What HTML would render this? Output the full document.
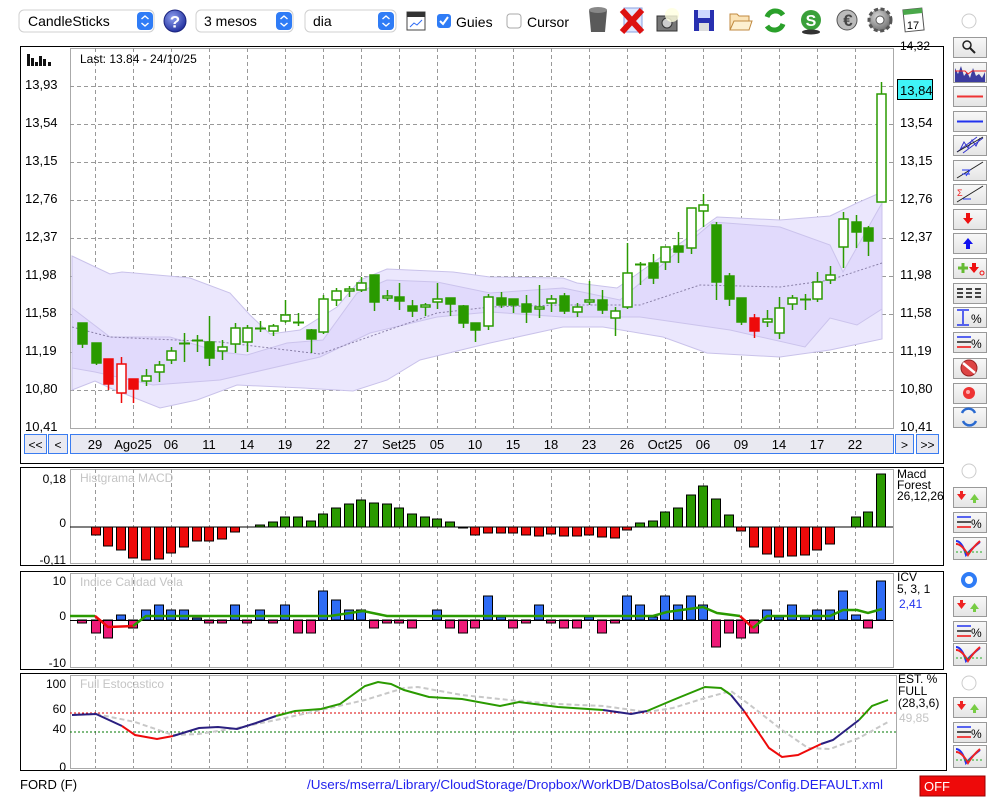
<!DOCTYPE html>
<html><head><meta charset="utf-8">
<style>
html,body{margin:0;padding:0;background:#fff;width:1000px;height:800px;overflow:hidden;font-family:"Liberation Sans",sans-serif;}
svg{display:block}
text{font-family:"Liberation Sans",sans-serif;}
</style></head>
<body>
<svg id="s" width="1000" height="800" viewBox="0 0 1000 800" xmlns="http://www.w3.org/2000/svg">
<defs>
<linearGradient id="btn" x1="0" y1="0" x2="0" y2="1"><stop offset="0" stop-color="#f8f8f8"/><stop offset="1" stop-color="#e4e4e4"/></linearGradient>
<radialGradient id="help" cx="0.4" cy="0.35" r="0.7"><stop offset="0" stop-color="#8fa0f0"/><stop offset="1" stop-color="#1c2a9a"/></radialGradient>
<radialGradient id="gear" cx="0.4" cy="0.35" r="0.7"><stop offset="0" stop-color="#d8d8d8"/><stop offset="1" stop-color="#6a6a6a"/></radialGradient>
</defs>
<!-- toolbar -->
<rect x="19" y="10" width="135" height="22" rx="5" fill="#fff" stroke="#d0d0d0"/>
<text x="28" y="26" font-size="14">CandleSticks</text>
<rect x="137" y="12" width="16" height="18" rx="4" fill="#2f7cf6"/>
<path d="M141.5 19 l3.5 -3 l3.5 3 M141.5 23 l3.5 3 l3.5 -3" stroke="#fff" stroke-width="1.4" fill="none"/>
<circle cx="175" cy="21" r="11" fill="url(#help)" stroke="#1a237e"/>
<text x="175" y="27.5" font-size="17" font-weight="bold" fill="#fff" text-anchor="middle">?</text>
<rect x="196" y="10" width="97" height="22" rx="5" fill="#fff" stroke="#d0d0d0"/>
<text x="204" y="26" font-size="14">3 mesos</text>
<rect x="276" y="12" width="16" height="18" rx="4" fill="#2f7cf6"/>
<path d="M280.5 19 l3.5 -3 l3.5 3 M280.5 23 l3.5 3 l3.5 -3" stroke="#fff" stroke-width="1.4" fill="none"/>
<rect x="305" y="10" width="91" height="22" rx="5" fill="#fff" stroke="#d0d0d0"/>
<text x="313" y="26" font-size="14">dia</text>
<rect x="378" y="12" width="16" height="18" rx="4" fill="#2f7cf6"/>
<path d="M382.5 19 l3.5 -3 l3.5 3 M382.5 23 l3.5 3 l3.5 -3" stroke="#fff" stroke-width="1.4" fill="none"/>
<rect x="407" y="12" width="18" height="18" fill="#fff" stroke="#444"/>
<rect x="407" y="12" width="18" height="5" fill="#333"/>
<path d="M410 27 l4 -4 l3 2 l5 -5" stroke="#2f6cf5" fill="none"/>
<rect x="437" y="14" width="14" height="14" rx="3" fill="#2f7cf6"/>
<path d="M440 21 l3 3 l5 -7" stroke="#fff" stroke-width="2" fill="none"/>
<text x="456" y="27" font-size="14">Guies</text>
<rect x="507" y="14" width="14" height="14" rx="3" fill="#fff" stroke="#aaa"/>
<text x="527" y="27" font-size="14">Cursor</text>
<!-- toolbar icons -->
<path d="M589 10 h18 l-2 22 h-14 z" fill="#5a5a5a"/><ellipse cx="598" cy="10" rx="9" ry="3" fill="#888"/>
<rect x="624" y="8" width="18" height="24" fill="#dfe8ff" stroke="#8aa0e0"/>
<path d="M622 10 l20 22 M642 10 l-20 22" stroke="#d11" stroke-width="6"/>
<rect x="657" y="16" width="20" height="15" fill="#777" stroke="#333"/><circle cx="667" cy="23" r="5" fill="#ccc" stroke="#333"/><circle cx="672" cy="15" r="7" fill="#ffffe0" opacity=".8"/>
<rect x="694" y="10" width="20" height="21" fill="#2830b0"/><rect x="698" y="10" width="12" height="8" fill="#cfd8ff"/><rect x="699" y="23" width="10" height="8" fill="#ddd"/>
<path d="M730 14 h7 l2 2 h10 v14 h-19 z" fill="#fbe4b8" stroke="#c08a40"/><path d="M730 30 l4 -9 h18 l-3 9 z" fill="#fdf0d0" stroke="#c08a40"/>
<path d="M767 17 a9 9 0 0 1 16 -2" stroke="#2aa02a" stroke-width="5" fill="none"/><path d="M783 24 a9 9 0 0 1 -16 2" stroke="#2aa02a" stroke-width="5" fill="none"/>
<circle cx="811" cy="20" r="10" fill="#3aa03a"/><ellipse cx="811" cy="32" rx="9" ry="2.5" fill="#333"/><text x="811" y="26" font-size="16" font-weight="bold" fill="#fff" text-anchor="middle">S</text>
<circle cx="847" cy="20" r="10" fill="#bbb" stroke="#555"/><text x="848" y="26" font-size="17" font-weight="bold" fill="#444" text-anchor="middle">€</text>
<circle cx="880" cy="20" r="11" fill="url(#gear)" stroke="#555" stroke-dasharray="4 2.5" stroke-width="3"/><circle cx="880" cy="20" r="4" fill="#fff" stroke="#555"/>
<rect x="904" y="9" width="19" height="22" fill="#fff" stroke="#555" transform="rotate(-6 913 20)"/><rect x="904" y="9" width="19" height="5" fill="#4aa84a" transform="rotate(-6 913 20)"/><text x="913" y="29" font-size="11" text-anchor="middle">17</text>
<circle cx="969" cy="21" r="7" fill="#fff" stroke="#ccc"/>

<!-- main panel -->
<rect x="20.5" y="46.5" width="923" height="417" fill="#fff" stroke="#000"/>
<rect x="70.5" y="48.5" width="823" height="380" fill="#fff" stroke="#aaa"/>
<g id="grid" stroke="#999" stroke-dasharray="4 3" stroke-width="1"></g>
<g id="bands"></g>
<g id="candles"></g>
<!-- bar icon -->
<g fill="#111"><rect x="27" y="54" width="3" height="12"/><rect x="31" y="58" width="3" height="8"/><rect x="35" y="62" width="3" height="4"/><rect x="39" y="56" width="3" height="10"/><rect x="43" y="59" width="3" height="7"/><rect x="48" y="62" width="3" height="4"/></g>
<text x="80" y="63" font-size="12">Last: 13.84 - 24/10/25</text>
<g font-size="13" id="ylab"></g>
<text x="900" y="50" font-size="12">14,32</text>
<rect x="897.5" y="79.5" width="35" height="20" fill="#40f4f8" stroke="#000"/>
<text x="900" y="95" font-size="13">13,84</text>
<!-- axis bar -->
<rect x="24.5" y="434.5" width="22" height="19" fill="#e9e9f1" stroke="#3a7cf0"/>
<text x="35.5" y="449" font-size="12" text-anchor="middle">&lt;&lt;</text>
<rect x="48.5" y="434.5" width="19" height="19" fill="#e9e9f1" stroke="#3a7cf0"/>
<text x="58" y="449" font-size="12" text-anchor="middle">&lt;</text>
<rect x="70.5" y="434.5" width="823" height="19" fill="#e9e9f1" stroke="#3a7cf0"/>
<rect x="895.5" y="434.5" width="18" height="19" fill="#e9e9f1" stroke="#3a7cf0"/>
<text x="904.5" y="449" font-size="12" text-anchor="middle">&gt;</text>
<rect x="916.5" y="434.5" width="22" height="19" fill="#e9e9f1" stroke="#3a7cf0"/>
<text x="927.5" y="449" font-size="12" text-anchor="middle">&gt;&gt;</text>
<g font-size="13" text-anchor="middle" id="xlab"></g>

<!-- MACD panel -->
<rect x="20.5" y="467.5" width="923" height="98" fill="#fff" stroke="#000"/>
<rect x="70.5" y="469.5" width="823" height="94" fill="#fff" stroke="#aaa"/>
<g id="grid2" stroke="#999" stroke-dasharray="4 3"></g>
<text x="80" y="482" font-size="12" fill="#c4c4c4">Histgrama MACD</text>
<text x="66" y="483" font-size="12" text-anchor="end">0,18</text>
<text x="66" y="527" font-size="12" text-anchor="end">0</text>
<text x="66" y="564" font-size="12" text-anchor="end">-0,11</text>
<line x1="70" y1="527" x2="893" y2="527" stroke="#000"/>
<g id="macd" stroke="#000" stroke-width="1"></g>
<text x="897" y="478" font-size="12">Macd</text>
<text x="897" y="489" font-size="12">Forest</text>
<text x="897" y="500" font-size="12">26,12,26</text>

<!-- ICV panel -->
<rect x="20.5" y="571.5" width="923" height="98" fill="#fff" stroke="#000"/>
<rect x="70.5" y="573.5" width="823" height="94" fill="#fff" stroke="#aaa"/>
<g id="grid3" stroke="#999" stroke-dasharray="4 3"></g>
<text x="80" y="586" font-size="12" fill="#c4c4c4">Indice Calidad Vela</text>
<text x="66" y="585" font-size="12" text-anchor="end">10</text>
<text x="66" y="620" font-size="12" text-anchor="end">0</text>
<text x="66" y="667" font-size="12" text-anchor="end">-10</text>
<g id="icv" stroke="#000" stroke-width="1"></g>
<line x1="70" y1="620.5" x2="893" y2="620.5" stroke="#000"/>
<g id="icvline" fill="none" stroke-width="2.5"></g>
<text x="897" y="581" font-size="12">ICV</text>
<text x="897" y="593" font-size="12">5, 3, 1</text>
<text x="899" y="608" font-size="12" fill="#2233ee">2,41</text>

<!-- Stoch panel -->
<rect x="20.5" y="673.5" width="926" height="97" fill="#fff" stroke="#000"/>
<rect x="70.5" y="675.5" width="826" height="93" fill="#fff" stroke="#aaa"/>
<g id="grid4" stroke="#999" stroke-dasharray="4 3"></g>
<text x="80" y="688" font-size="12" fill="#c4c4c4">Full Estocastico</text>
<text x="66" y="688" font-size="12" text-anchor="end">100</text>
<text x="66" y="713" font-size="12" text-anchor="end">60</text>
<text x="66" y="733" font-size="12" text-anchor="end">40</text>
<text x="66" y="771" font-size="12" text-anchor="end">0</text>
<line x1="70" y1="713" x2="896" y2="713" stroke="#d00" stroke-dasharray="2 2"/>
<line x1="70" y1="732" x2="896" y2="732" stroke="#070" stroke-dasharray="2 2"/>
<g id="stoch" fill="none" stroke-width="2"></g>
<text x="898" y="683" font-size="12">EST. %</text>
<text x="898" y="695" font-size="12">FULL</text>
<text x="898" y="707" font-size="12">(28,3,6)</text>
<text x="899" y="722" font-size="12" fill="#c4c4c4">49,85</text>

<!-- status -->
<text x="20" y="789" font-size="13">FORD (F)</text>
<text x="307" y="789" font-size="13" fill="#2222ee" textLength="576" lengthAdjust="spacingAndGlyphs">/Users/mserra/Library/CloudStorage/Dropbox/WorkDB/DatosBolsa/Configs/Config.DEFAULT.xml</text>
<rect x="920" y="776" width="65" height="20" fill="#ee0a0a" stroke="#900"/>
<text x="924" y="791" font-size="13" fill="#fff">OFF</text>

<g id="side"></g>
</svg>
<script>
var NS="http://www.w3.org/2000/svg";
function el(p,t,a,txt){var e=document.createElementNS(NS,t);for(var k in a)e.setAttribute(k,a[k]);if(txt)e.textContent=txt;document.getElementById(p).appendChild(e);return e;}
var vx=[95,133,171,209,247,285,323,361,399,437,475,513,551,589,627,665,703,741,779,817,855];
[86,124,162,200,238,276,314,352,390].forEach(function(y){el('grid','line',{x1:70,x2:893,y1:y+.5,y2:y+.5});});
vx.forEach(function(x){el('grid','line',{x1:x+.5,x2:x+.5,y1:48,y2:428});
 el('grid2','line',{x1:x+.5,x2:x+.5,y1:469,y2:563});el('grid3','line',{x1:x+.5,x2:x+.5,y1:573,y2:667});el('grid4','line',{x1:x+.5,x2:x+.5,y1:675,y2:768});});
var yl=["13,93","13,54","13,15","12,76","12,37","11,98","11,58","11,19","10,80","10,41"];
yl.forEach(function(t,i){var y=89+i*38;el('ylab','text',{x:25,y:y},t);});
yl.slice(1).forEach(function(t,i){el('ylab','text',{x:900,y:127+i*38},t);});
var xl=["29","Ago25","06","11","14","19","22","27","Set25","05","10","15","18","23","26","Oct25","06","09","14","17","22"];
xl.forEach(function(t,i){el('xlab','text',{x:vx[i],y:449},t);});
function poly(pts){return pts.map(function(p){return p.join(',')}).join(' ');}
var ou=[[72,256],[110,274],[122,272],[180,277],[190,278],[230,293],[250,315],[270,334],[300,330],[337,307],[360,280],[387,269],[453,272],[490,277],[563,278],[577,283],[617,288],[633,277],[717,217],[780,220],[830,216],[857,203],[882,192]];
var ol=[[72,390],[95,381],[110,388],[160,408],[197,400],[237,385],[303,388],[353,391],[387,380],[420,360],[490,343],[563,327],[603,327],[663,337],[707,353],[780,357],[830,350],[882,339]];
var iu=[[72,308],[110,337],[170,337],[220,352],[247,355],[287,343],[323,340],[357,293],[387,280],[437,282],[490,293],[563,288],[620,300],[713,222],[780,227],[830,245],[843,272],[882,203]];
var il=[[72,368],[95,372],[153,385],[220,380],[320,357],[370,333],[437,317],[490,312],[563,317],[640,317],[730,330],[805,347],[830,318],[857,325],[882,309]];
el('bands','polygon',{points:poly(ou.concat(ol.slice().reverse())),fill:'#ebe7fd',stroke:'#c9c2ea'});
el('bands','polygon',{points:poly(iu.concat(il.slice().reverse())),fill:'#e1dafc',stroke:'#cbc3ec'});
var mid=[[72,327],[110,337],[220,342],[320,354],[437,313],[490,307],[560,305],[640,305],[700,285],[780,287],[830,280],[882,263]];
el('bands','polyline',{points:poly(mid),fill:'none',stroke:'#8a80a8','stroke-dasharray':'2 2'});
var C=[[82,323,344,323,348,'g'],[96,343,363,343,365,'g'],[108,359,384,359,390,'r'],[121,364,393,357,403,'rw'],[133,379,389,379,403,'r'],[146,376,381,369,386,'w'],[159,365,372,361,382,'w'],[171,351,360,347,364,'w'],[184,343,345,333,362,'d'],[197,340,341,335,352,'d'],[209,342,358,316,366,'g'],[222,347,351,340,360,'w'],[235,328,344,323,353,'w'],[247,328,342,325,352,'w'],[260,328,329,321,332,'d'],[273,326,331,324,336,'w'],[285,315,321,300,323,'w'],[298,322,323,313,326,'d'],[311,330,339,329,353,'g'],[323,299,332,295,334,'w'],[336,291,300,288,306,'w'],[349,289,291,286,297,'w'],[361,283,290,277,292,'w'],[374,275,302,275,311,'g'],[387,296,298,290,301,'w'],[399,297,301,283,310,'g'],[412,306,311,300,317,'g'],[425,305,307,303,316,'w'],[437,299,302,283,309,'w'],[450,298,304,298,316,'g'],[463,306,323,305,328,'g'],[475,323,330,323,342,'g'],[488,297,326,294,330,'w'],[501,298,305,292,308,'g'],[513,299,305,299,313,'g'],[526,304,312,295,323,'g'],[539,307,309,285,318,'w'],[551,299,303,295,312,'w'],[564,296,311,293,314,'g'],[577,307,312,303,317,'w'],[589,300,302,281,305,'w'],[602,300,310,290,314,'g'],[615,311,318,307,336,'w'],[627,273,307,243,309,'w'],[640,264,265,262,285,'d'],[653,263,278,254,284,'g'],[665,247,262,247,270,'w'],[678,246,252,232,263,'g'],[691,208,248,208,254,'w'],[703,205,211,194,227,'w'],[716,225,282,222,300,'g'],[729,276,299,273,306,'g'],[741,298,322,298,325,'g'],[754,318,331,314,338,'r'],[767,319,322,310,327,'w'],[779,308,333,297,339,'w'],[792,298,304,295,310,'w'],[805,299,300,294,310,'d'],[817,282,299,272,302,'w'],[830,275,280,266,284,'w'],[843,219,247,212,268,'w'],[856,222,232,215,248,'g'],[868,228,241,226,256,'g'],[881,94,202,82,202,'w']];
var G='#2a9a00',R='#ee0a0a';
C.forEach(function(c){var x=c[0],col=(c[5]=='r'||c[5]=='rw')?R:G;
 el('candles','line',{x1:x+.5,x2:x+.5,y1:c[3],y2:c[4],stroke:col,'stroke-width':1.5});
 if(c[5]=='d'){el('candles','line',{x1:x-5,x2:x+6,y1:c[1]+.5,y2:c[1]+.5,stroke:col,'stroke-width':2});return;}
 var fill=(c[5]=='g')?G:(c[5]=='r'?R:'#fff');
 el('candles','rect',{x:x-4,y:c[1],width:9,height:Math.max(2,c[2]-c[1]),fill:fill,stroke:col,'stroke-width':1.5});});
var M=[null,-8,-19,-23,-31,-33,-32,-26,-20,-14,-14,-12,-5,0,2,5,10,10,6,13,19,23,27,24,23,19,13,10,8,5,-1,-8,-6,-6,-6,-8,-9,-7,-9,-9,-8,-10,-11,-3,4,6,15,19,32,41,28,12,-4,-20,-27,-30,-29,-28,-23,-17,0,10,15,53];
M.forEach(function(v,i){if(v===null||v===0)return;var x=C[i][0];
 if(v>0)el('macd','rect',{x:x-4.5,y:527-v,width:9,height:v,fill:G});else el('macd','rect',{x:x-4.5,y:527,width:9,height:-v,fill:R});});
var I=[-3,-13,-18,5,-8,10,15,10,10,2,-3,-3,15,-3,10,-3,15,-13,-13,29,20,10,10,-8,-3,-3,-8,0,10,-8,-13,-8,24,3,-8,-3,15,-3,-8,-8,3,-13,-3,24,15,3,24,15,24,15,-27,-13,-18,-13,10,3,15,3,10,10,29,5,-8,39];
I.forEach(function(v,i){if(v===0)return;var x=C[i][0];
 if(v>0)el('icv','rect',{x:x-4.5,y:620-v,width:9,height:v,fill:'#2f6cf5'});else el('icv','rect',{x:x-4.5,y:620,width:9,height:-v,fill:'#ee1a78'});});
el('icvline','polyline',{points:'70,616 95,616',stroke:G});
el('icvline','polyline',{points:'95,616 108,627 133,626',stroke:R});
el('icvline','polyline',{points:'133,626 146,616 330,616 363,611 387,616 653,616 667,612 703,607 717,613 740,616',stroke:G});
el('icvline','polyline',{points:'740,616 753,628',stroke:R});
el('icvline','polyline',{points:'753,628 767,616 830,616 843,610 857,610 868,613 882,609',stroke:G});
var S=[[72,715],[96,714],[122,726],[135,735],[157,739],[173,736],[199,728],[218,727],[237,729],[256,723],[276,716],[295,711],[321,709],[340,704],[365,686],[378,682],[391,684],[404,690],[429,697],[462,699],[500,706],[519,702],[558,707],[603,710],[631,714],[647,711],[673,700],[705,687],[721,688],[731,695],[744,711],[769,748],[782,757],[798,755],[821,744],[833,740],[859,720],[872,706],[888,700]];
el('stoch','polyline',{points:'72,715 96,714 135,722 173,735 199,734 237,728 276,720 321,710 365,700 404,688 418,687 462,695 519,701 558,704 603,706 647,712 673,708 705,698 731,691 750,705 782,730 808,748 830,749 859,738 888,722',stroke:'#c8c8c8','stroke-dasharray':'5 3'});
var segs=[[72,122,'#2a1f80'],[122,173,R],[173,276,'#2a1f80'],[276,603,G],[603,647,'#2a1f80'],[647,731,G],[731,744,'#2a1f80'],[744,821,R],[821,859,'#2a1f80'],[859,888,G]];
segs.forEach(function(s){var p=S.filter(function(q){return q[0]>=s[0]&&q[0]<=s[1];});el('stoch','polyline',{points:poly(p),stroke:s[2]});});
function btn(y,h){el('side','rect',{x:953.5,y:y+.5,width:33,height:h||20,fill:'url(#btn)',stroke:'#999'});}
var by=[37,62,86,111,135,160,184,209,233,258,283,307,332,358,383,407];
by.forEach(function(y){btn(y);});
var sd=document.getElementById('side');
sd.insertAdjacentHTML('beforeend',
'<circle cx="967" cy="45" r="4" fill="none" stroke="#222" stroke-width="1.5"/><line x1="970" y1="48" x2="975" y2="53" stroke="#222" stroke-width="2"/>'+
'<path d="M955 82 v-14 l3 6 l3 -8 l3 10 l3 -4 l3 6 l3 -10 l3 8 l3 -2 l3 4 l3 -6 v10 z" fill="#3c3ca0"/><path d="M955 71 h10 l3 3 l4 -3 h14" stroke="#e22" fill="none"/>'+
'<line x1="957" y1="96.5" x2="983" y2="96.5" stroke="#e33" stroke-width="2"/>'+
'<line x1="957" y1="121.5" x2="983" y2="121.5" stroke="#23e" stroke-width="2"/>'+
'<path d="M957 152 l20 -15 M963 153 l20 -15 M960 150 l4 -8 l4 6 l4 -8 l4 6 l4 -8" stroke="#33c" fill="none"/><path d="M957 152 l26 -15" stroke="#222"/>'+
'<path d="M957 178 l26 -16" stroke="#222"/><path d="M962 174 h8 M962 170 h8 l-4 6" stroke="#23e" fill="none"/>'+
'<path d="M957 202 l26 -16" stroke="#222"/><text x="957" y="196" font-size="9" fill="#e22">Σ</text><path d="M963 199 h8" stroke="#23e"/>'+
'<path d="M966 213 h4 v5 h3 l-5 6 l-5 -6 h3 z" fill="#e11"/>'+
'<path d="M966 249 h4 v-5 h3 l-5 -6 l-5 6 h3 z" fill="#11e"/>'+
'<path d="M958 268 h10 M963 263 v10" stroke="#6b3" stroke-width="3"/><path d="M972 263 h4 v4 h3 l-5 6 l-5 -6 h3 z" fill="#e11"/><circle cx="982" cy="273" r="2" fill="none" stroke="#e11"/>'+
'<path d="M957 289 h26 M957 293 h26 M957 297 h26" stroke="#444" stroke-width="2" stroke-dasharray="6 3"/>'+
'<path d="M957 310 h12 M957 325 h12 M963 311 v13" stroke="#23e" stroke-width="1.5"/><text x="971" y="323" font-size="12">%</text>'+
'<path d="M957 337 h14" stroke="#23e" stroke-width="1.5"/><path d="M957 342 h14" stroke="#222" stroke-width="1.5"/><path d="M957 347 h14" stroke="#e44" stroke-width="2"/><text x="971" y="348" font-size="12">%</text>'+
'<circle cx="969" cy="368" r="8" fill="#d44" stroke="#922"/><line x1="963" y1="363" x2="975" y2="373" stroke="#fff" stroke-width="2.5"/>'+
'<circle cx="969" cy="393" r="6" fill="#e33"/><circle cx="968" cy="392" r="2" fill="#faa"/>'+
'<path d="M962 413 a7 7 0 0 1 13 0 M976 421 a7 7 0 0 1 -13 0" stroke="#2a6ad0" stroke-width="2.5" fill="none"/>'
);
function sub(r,y,filled){
 sd.insertAdjacentHTML('beforeend', filled?'<circle cx="969" cy="'+r+'" r="6" fill="#fff" stroke="#2f7cf6" stroke-width="4"/>':'<circle cx="969" cy="'+r+'" r="7" fill="#fff" stroke="#ccc"/>');
 btn(y[0]);btn(y[1]);btn(y[2],22);
 sd.insertAdjacentHTML('beforeend',
 '<path d="M957 '+(y[0]+7)+' h3 v-3 h3 v3 h3 l-4.5 6 z" fill="#e22"/><path d="M970 '+(y[0]+13)+' h3 v3 h3 v-3 h3 l-4.5 -6 z" fill="#7c4"/>'+
 '<path d="M957 '+(y[1]+5)+' h14" stroke="#23e" stroke-width="1.5"/><path d="M957 '+(y[1]+10)+' h14" stroke="#222" stroke-width="1.5"/><path d="M957 '+(y[1]+15)+' h14" stroke="#e44" stroke-width="2"/><text x="971" y="'+(y[1]+16)+'" font-size="12">%</text>'+
 '<path d="M956 '+(y[2]+4)+' q6 0 10 14 q5 -6 14 -13" stroke="#23e" stroke-width="2" fill="none"/><path d="M956 '+(y[2]+7)+' q6 0 12 11 q5 -8 12 -14" stroke="#e22" stroke-width="2" fill="none"/><path d="M956 '+(y[2]+15)+' h28" stroke="#2a2" stroke-dasharray="2 2"/>');
}
sub(471,[487,512,537],false);
sub(580,[596,621,643],true);
sub(683,[697,722,745],false);
</script>
</body></html>
